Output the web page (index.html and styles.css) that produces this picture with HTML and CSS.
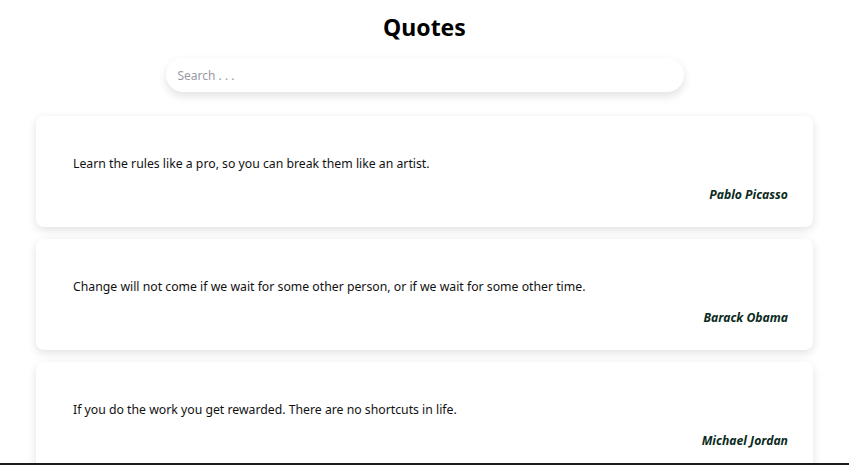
FILE: index.html
```html
<!DOCTYPE html>
<html lang="en">
<head>
<meta charset="utf-8">
<title>Quotes</title>
<link rel="stylesheet" href="styles.css">
</head>
<body>
<header class="header">
  <h1 class="title">Quotes</h1>
  <input class="search" type="text" placeholder="Search . . .">
</header>
<main class="list">
  <article class="card">
    <p class="quote">Learn the rules like a pro, so you can break them like an artist.</p>
    <p class="author">Pablo Picasso</p>
  </article>
  <article class="card">
    <p class="quote">Change will not come if we wait for some other person, or if we wait for some other time.</p>
    <p class="author">Barack Obama</p>
  </article>
  <article class="card">
    <p class="quote">If you do the work you get rewarded. There are no shortcuts in life.</p>
    <p class="author">Michael Jordan</p>
  </article>
</main>
<div class="edge"></div>
</body>
</html>
```

FILE: styles.css
```css
html, body {
  margin: 0;
  padding: 0;
  background: #ffffff;
  overflow: hidden;
  height: 465px;
}
body {
  font-family: "Noto Sans", "Open Sans", sans-serif;
  color: #111;
}
.header {
  display: flex;
  flex-direction: column;
  align-items: center;
  padding-top: 11px;
}
.title {
  margin: 0;
  font-size: 23px;
  font-weight: 700;
  line-height: 32px;
  color: #000;
}
.search {
  margin-top: 15px;
  width: 518px;
  height: 34px;
  box-sizing: border-box;
  border: none;
  border-radius: 17px;
  padding: 0 12px;
  font-family: "Noto Sans", sans-serif;
  font-size: 12px;
  color: #333;
  background: #fff;
  box-shadow: 0 4px 10px rgba(0, 0, 0, 0.12);
  outline: none;
}
.search::placeholder {
  color: #9a9aa4;
}
.list {
  display: flex;
  flex-direction: column;
  gap: 12px;
  margin: 24px 36px 0;
}
.card {
  background: #fff;
  border-radius: 8px;
  box-shadow: 0 3px 10px rgba(0, 0, 0, 0.12);
  padding: 39px 25px 23px 37px;
  display: flex;
  flex-direction: column;
}
.quote {
  margin: 0;
  font-size: 12.25px;
  line-height: 18px;
  color: #111;
}
.author {
  margin: 13px 0 0;
  text-align: right;
  font-size: 12.2px;
  line-height: 18px;
  font-weight: 700;
  font-style: italic;
  color: #0c2b22;
}
.edge {
  position: fixed;
  left: 0;
  right: 0;
  bottom: 0;
  height: 2px;
  background: #1b1a1e;
}
```
